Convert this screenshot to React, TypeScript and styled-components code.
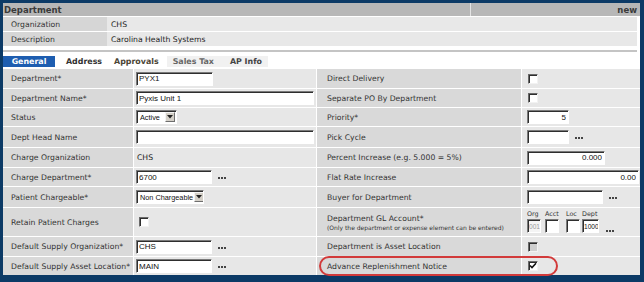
import styled, { createGlobalStyle } from "styled-components";

const GlobalStyle = createGlobalStyle`
  html, body {
    margin: 0;
    padding: 0;
    background: #0c3a66;
  }
  * { box-sizing: border-box; }
`;

const Frame = styled.div`
  width: 644px;
  height: 282px;
  background: #0c3a66;
  padding: 3px 4px 7px 3px;
  overflow: hidden;
`;

const Panel = styled.div`
  background: #ffffff;
  height: 100%;
  display: flex;
  flex-direction: column;
  font-family: "DejaVu Sans", Verdana, sans-serif;
  font-size: 7.7px;
  color: #333333;
`;

const TitleBar = styled.div`
  display: grid;
  grid-template-columns: 1fr 170px;
  height: 13px;
  background: #b7b7b7;
  font-weight: bold;
  font-size: 8.5px;
  color: #3a3a3a;
  margin-bottom: 1px;
`;

const TitleCell = styled.div<{ $right?: boolean }>`
  display: flex;
  align-items: center;
  padding: 0 ${(p) => (p.$right ? "3px" : "1px")};
  justify-content: ${(p) => (p.$right ? "flex-end" : "flex-start")};
  border-left: ${(p) => (p.$right ? "1px solid #e4e4e4" : "none")};
`;

const InfoTable = styled.div`
  display: grid;
  grid-template-columns: 104px 1fr;
  grid-auto-rows: 14px;
  row-gap: 1px;
  margin-right: 3px;
`;

const InfoLabel = styled.div`
  background: #d6d6d6;
  display: flex;
  align-items: center;
  padding-left: 8px;
`;

const InfoValue = styled.div`
  background: #e8e8e8;
  display: flex;
  align-items: center;
  padding-left: 4px;
  color: #222;
`;

const Divider = styled.div`
  height: 2px;
  background: #c4c4c4;
  margin: 4px 3px 3px 0;
`;

const TabBar = styled.div`
  display: flex;
  align-items: center;
  height: 12px;
  margin-bottom: 2px;
  font-weight: bold;
  font-size: 7.9px;
`;

const Tab = styled.div<{ $active?: boolean; $color?: string; $shade?: boolean; $gap?: number }>`
  height: 11px;
  display: flex;
  align-items: center;
  justify-content: center;
  padding: 0 ${(p) => (p.$active ? "4px" : "6px")};
  margin-left: ${(p) => p.$gap || 0}px;
  margin-right: ${(p) => (p.$active ? "5px" : "0")};
  background: ${(p) => (p.$active ? "#1d5db0" : p.$shade ? "#f1f1f1" : "transparent")};
  color: ${(p) => (p.$active ? "#ffffff" : p.$color || "#333")};
  min-width: ${(p) => (p.$active ? "52px" : "auto")};
`;

const Form = styled.div`
  position: relative;
  display: grid;
  grid-template-columns: 130px 182px 204px 1fr;
  grid-template-rows: 19px 18px 18px 20px 19px 18px 20px 28px 19px 18px;
  gap: 1px;
  background: #ffffff;
`;

const Label = styled.div<{ $right?: boolean }>`
  background: #d9d9d9;
  display: flex;
  flex-direction: column;
  justify-content: center;
  padding-left: ${(p) => (p.$right ? "10px" : "8px")};
  white-space: nowrap;
`;

const Note = styled.span`
  font-size: 6px;
  color: #333;
  margin-top: 1px;
`;

const Value = styled.div<{ $right?: boolean; $text?: boolean }>`
  background: #e7e7e7;
  display: flex;
  align-items: center;
  padding-left: ${(p) => (p.$right ? "5px" : p.$text ? "3px" : "2px")};
  color: #222;
`;

const Input = styled.input<{ $w: number; $align?: string; $muted?: boolean; $small?: boolean }>`
  width: ${(p) => p.$w}px;
  height: 14px;
  padding: 0 ${(p) => (p.$small ? "0 0 1px" : "2px")};
  margin: 0;
  border: 1px solid #ffffff;
  border-top-color: #7a7a7a;
  border-left-color: #7a7a7a;
  box-shadow: inset 1px 1px 0 #2e2e2e;
  background: ${(p) => (p.$muted ? "#f4f4f4" : "#ffffff")};
  font-family: "Liberation Sans", Arial, sans-serif;
  font-size: ${(p) => (p.$small ? "6.6px" : "8px")};
  color: ${(p) => (p.$muted ? "#9a9a9a" : "#111")};
  text-align: ${(p) => p.$align || "left"};
  outline: none;
`;

const Select = styled.div<{ $w: number }>`
  width: ${(p) => p.$w}px;
  height: 14px;
  display: flex;
  align-items: center;
  justify-content: space-between;
  padding: 0 1px 0 3px;
  border: 1px solid #ffffff;
  border-top-color: #7a7a7a;
  border-left-color: #7a7a7a;
  box-shadow: inset 1px 1px 0 #2e2e2e;
  background: #fff;
  font-family: "Liberation Sans", Arial, sans-serif;
  font-size: 7.3px;
  color: #111;
  white-space: nowrap;
  overflow: hidden;
`;

const SelectButton = styled.span`
  flex: none;
  width: 10px;
  height: 10px;
  margin-left: 1px;
  background: #d4d0c8;
  border: 1px solid;
  border-color: #f4f4f4 #6e6e6e #6e6e6e #f4f4f4;
  display: flex;
  align-items: center;
  justify-content: center;
`;

const Check = styled.span<{ $disabled?: boolean; $offset?: number }>`
  width: 10px;
  height: 10px;
  margin-left: ${(p) => p.$offset || 1}px;
  border: 1px solid;
  border-color: #6a6a6a #f2f2f2 #f2f2f2 #6a6a6a;
  box-shadow: inset 1px 1px 0 #2e2e2e;
  background: ${(p) => (p.$disabled ? "#cfcfcf" : "#ffffff")};
  display: flex;
  align-items: center;
  justify-content: center;
`;

const Lookup = styled.span`
  display: inline-flex;
  margin-left: 6px;
  margin-top: 3px;
`;

const GLGroup = styled.div`
  display: flex;
  align-items: flex-end;
  padding-bottom: 1px;
`;

const GLField = styled.div<{ $w: number }>`
  width: ${(p) => p.$w}px;
  display: flex;
  flex-direction: column;
  font-size: 6.4px;
  color: #333;
  gap: 1px;
`;

const Ring = styled.div`
  position: absolute;
  left: 316px;
  bottom: -1px;
  width: 239px;
  height: 20px;
  border: 2px solid #d23a3a;
  border-radius: 10px;
  pointer-events: none;
`;

const Dots = () => (
  <Lookup>
    <svg width="9" height="3" viewBox="0 0 9 3">
      <rect x="0" y="0" width="2" height="2" fill="#444" />
      <rect x="3" y="0" width="2" height="2" fill="#444" />
      <rect x="6" y="0" width="2" height="2" fill="#444" />
    </svg>
  </Lookup>
);

const Arrow = () => (
  <svg width="6" height="4" viewBox="0 0 6 4">
    <path d="M0 0 L6 0 L3 3.5 Z" fill="#222" />
  </svg>
);

const Tick = () => (
  <svg width="8" height="8" viewBox="0 0 8 8">
    <path d="M1 3.5 L3 5.5 L7 1.2" stroke="#111" strokeWidth="1.6" fill="none" />
  </svg>
);

export default function App() {
  return (
    <Frame>
      <GlobalStyle />
      <Panel>
        <TitleBar>
          <TitleCell>Department</TitleCell>
          <TitleCell $right>new</TitleCell>
        </TitleBar>
        <InfoTable>
          <InfoLabel>Organization</InfoLabel>
          <InfoValue>CHS</InfoValue>
          <InfoLabel>Description</InfoLabel>
          <InfoValue>Carolina Health Systems</InfoValue>
        </InfoTable>
        <Divider />
        <TabBar>
          <Tab $active>General</Tab>
          <Tab>Address</Tab>
          <Tab $color="#4b4536">Approvals</Tab>
          <Tab $shade $gap={2} $color="#666">Sales Tax</Tab>
          <Tab $shade $color="#444" style={{ paddingLeft: 10 }}>AP Info</Tab>
        </TabBar>
        <Form>
          <Label>Department*</Label>
          <Value><Input $w={77} value="PYX1" readOnly /></Value>
          <Label $right>Direct Delivery</Label>
          <Value $right><Check /></Value>

          <Label>Department Name*</Label>
          <Value><Input $w={178} value="Pyxis Unit 1" readOnly /></Value>
          <Label $right>Separate PO By Department</Label>
          <Value $right><Check /></Value>

          <Label>Status</Label>
          <Value>
            <Select $w={41}>Active<SelectButton><Arrow /></SelectButton></Select>
          </Value>
          <Label $right>Priority*</Label>
          <Value $right><Input $w={42} $align="right" value="5" readOnly /></Value>

          <Label>Dept Head Name</Label>
          <Value><Input $w={178} value="" readOnly /></Value>
          <Label $right>Pick Cycle</Label>
          <Value $right><Input $w={42} value="" readOnly /><Dots /></Value>

          <Label>Charge Organization</Label>
          <Value $text>CHS</Value>
          <Label $right>Percent Increase (e.g. 5.000 = 5%)</Label>
          <Value $right><Input $w={78} $align="right" value="0.000" readOnly /></Value>

          <Label>Charge Department*</Label>
          <Value><Input $w={76} value="6700" readOnly /><Dots /></Value>
          <Label $right>Flat Rate Increase</Label>
          <Value $right><Input $w={112} $align="right" value="0.00" readOnly /></Value>

          <Label>Patient Chargeable*</Label>
          <Value>
            <Select $w={68}>Non Chargeable<SelectButton><Arrow /></SelectButton></Select>
          </Value>
          <Label $right>Buyer for Department</Label>
          <Value $right><Input $w={76} value="" readOnly /><Dots /></Value>

          <Label>Retain Patient Charges</Label>
          <Value><Check $offset={3} /></Value>
          <Label $right>
            Department GL Account*
            <Note>(Only the department or expense element can be entered)</Note>
          </Label>
          <Value $right>
            <GLGroup>
              <GLField $w={18}>Org<Input $w={14} $small $muted value="001" readOnly /></GLField>
              <GLField $w={21}>Acct<Input $w={14} $small value="" readOnly /></GLField>
              <GLField $w={16}>Loc<Input $w={14} $small value="" readOnly /></GLField>
              <GLField $w={18}>Dept<Input $w={17} $small value="1000" readOnly /></GLField>
              <Dots />
            </GLGroup>
          </Value>

          <Label>Default Supply Organization*</Label>
          <Value><Input $w={76} value="CHS" readOnly /><Dots /></Value>
          <Label $right>Department is Asset Location</Label>
          <Value $right><Check $disabled /></Value>

          <Label>Default Supply Asset Location*</Label>
          <Value><Input $w={76} value="MAIN" readOnly /><Dots /></Value>
          <Label $right>Advance Replenishment Notice</Label>
          <Value $right><Check><Tick /></Check></Value>

          <Ring />
        </Form>
      </Panel>
    </Frame>
  );
}
